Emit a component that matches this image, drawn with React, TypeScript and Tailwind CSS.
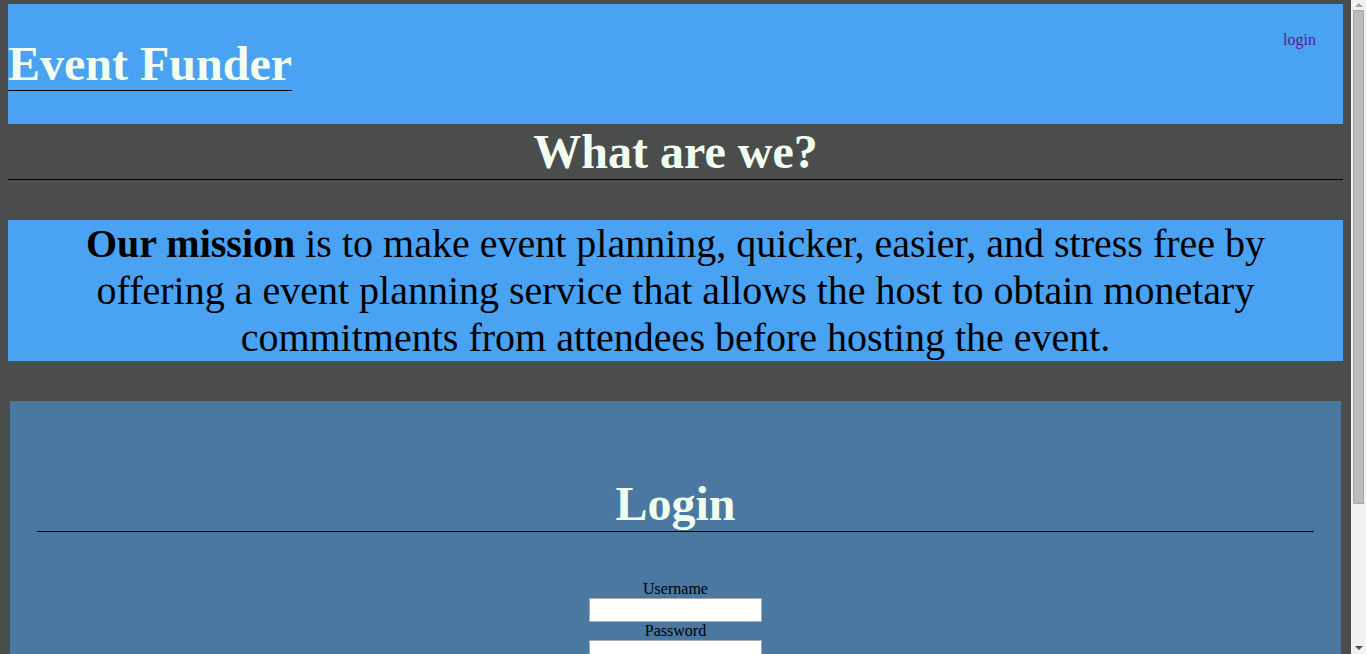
import React from 'react';

export default function App() {
  return (
    <div className="flex h-screen overflow-hidden bg-[#4b4d4d] font-['Liberation_Serif',serif] text-black">
      <div className="min-w-0 flex-1 px-2 pb-10">
        {/* Header */}
        <header className="mt-1 flex h-[120px] items-start justify-between bg-[#4aa2f2]">
          <h1 className="mt-[33px] inline-block border-b border-black text-[48px] font-bold leading-[53px] text-[#f0fff0]">
            Event Funder
          </h1>
          <a href="#" className="mr-[27px] mt-[27px] text-[16px] leading-[18px] text-[#551a8b]">
            login
          </a>
        </header>

        {/* About */}
        <h1 className="border-b border-black text-center text-[48px] font-bold leading-[55px] text-[#f0fff0]">
          What are we?
        </h1>

        <p className="mt-10 bg-[#4aa2f2] px-[50px] text-center text-[40px] leading-[47px]">
          <b>Our mission</b> is to make event planning, quicker, easier, and stress free by offering a event
          planning service that allows the host to obtain monetary commitments from attendees before hosting the
          event.
        </p>

        {/* Login */}
        <section className="mx-[2px] mt-10 bg-[#4a78a0] px-[27px] pb-16 pt-[75px]">
          <h1 className="border-b border-black text-center text-[48px] font-bold leading-[55px] text-[#f0fff0]">
            Login
          </h1>
          <form className="mt-[48px] flex flex-col items-center text-[16px] leading-[18px]">
            <label>Username</label>
            <input type="text" className="h-6 w-[173px] border border-[#a9a9a9] bg-white" />
            <label>Password</label>
            <input type="password" className="h-6 w-[173px] border border-[#a9a9a9] bg-white" />
            <button type="button" className="mt-3 border border-[#a9a9a9] bg-[#efefef] px-2 py-px text-[13px]">
              Submit
            </button>
          </form>
        </section>
      </div>

      {/* scrollbar */}
      <div className="flex w-[15px] shrink-0 flex-col items-center bg-[#f1f1f1]">
        <div className="mt-[3px] h-0 w-0 border-x-[4px] border-b-[4px] border-x-transparent border-b-[#a3a3a3]" />
        <div className="mt-[3px] h-[494px] w-[11px] border border-[#a8a8a8] bg-[#bcbcbc]" />
        <div className="mt-auto mb-[4px] h-0 w-0 border-x-[4px] border-t-[4px] border-x-transparent border-t-[#505050]" />
      </div>
    </div>
  );
}
